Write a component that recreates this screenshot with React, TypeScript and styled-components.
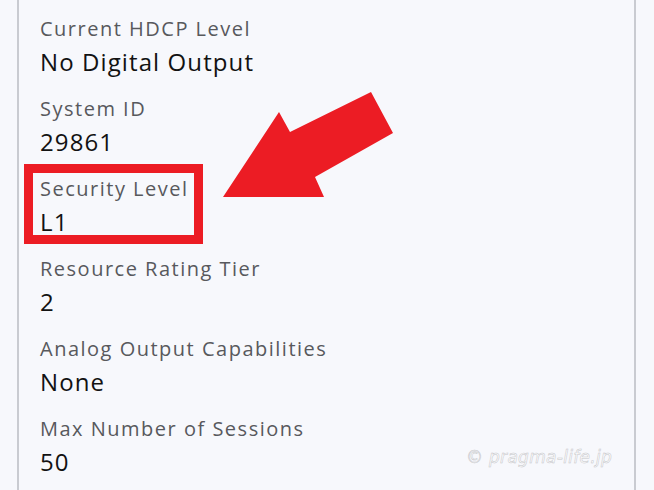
import React from 'react'
import styled, { createGlobalStyle } from "styled-components"

const GlobalStyle = createGlobalStyle`
    html, body {
        margin: 0;
        padding: 0;
        background: #f7f8fc;
        overflow: hidden;
    }
`

const Page = styled.div`
    position: relative;
    height: 490px;
    overflow: hidden;
    font-family: "Open Sans", "Noto Sans", sans-serif;
`

const Panel = styled.section`
    margin-left: 17px;
    width: 619px;
    height: 100%;
    box-sizing: border-box;
    border-left: 2px solid #c9cbd1;
    border-right: 2px solid #c9cbd1;
    padding: 16px 0 0 21px;
    display: flex;
    flex-direction: column;
    gap: 17px;
`

const Item = styled.div`
    display: flex;
    flex-direction: column;
`

const Label = styled.span`
    font-size: 20px;
    line-height: 26px;
    letter-spacing: 1.5px;
    color: #58595d;
`

const Value = styled.span`
    font-size: 24px;
    line-height: 32px;
    letter-spacing: 1.1px;
    padding-top: 4px;
    margin-bottom: 1px;
    color: #121212;
`

const Highlight = styled.div`
    position: absolute;
    left: 24px;
    top: 164px;
    width: 179px;
    height: 80px;
    box-sizing: border-box;
    border: 9px solid #ec1c24;
`

const Arrow = styled.svg`
    position: absolute;
    left: 0;
    top: 0;
`

const Watermark = styled.span`
    position: absolute;
    left: 466px;
    top: 447px;
    font-family: "DejaVu Sans", sans-serif;
    font-style: italic;
    font-size: 17px;
    letter-spacing: 0.3px;
    color: #ffffff;
    -webkit-text-stroke: 0.5px #c4c5c9;
`

const items = [
    { label: "Current HDCP Level", value: "No Digital Output" },
    { label: "System ID", value: "29861" },
    { label: "Security Level", value: "L1" },
    { label: "Resource Rating Tier", value: "2" },
    { label: "Analog Output Capabilities", value: "None" },
    { label: "Max Number of Sessions", value: "50" },
]

export default function App() {
    return (
        <>
            <GlobalStyle />
            <Page>
                <Panel>
                    {items.map((it) => (
                        <Item key={it.label}>
                            <Label>{it.label}</Label>
                            <Value>{it.value}</Value>
                        </Item>
                    ))}
                </Panel>
                <Highlight />
                <Arrow width="654" height="490" viewBox="0 0 654 490">
                    <polygon
                        points="223,197 279,112 290,132 371,92 393,133 315,177 324,197"
                        fill="#ec1c24"
                    />
                </Arrow>
                <Watermark>© pragma-life.jp</Watermark>
            </Page>
        </>
    )
}
